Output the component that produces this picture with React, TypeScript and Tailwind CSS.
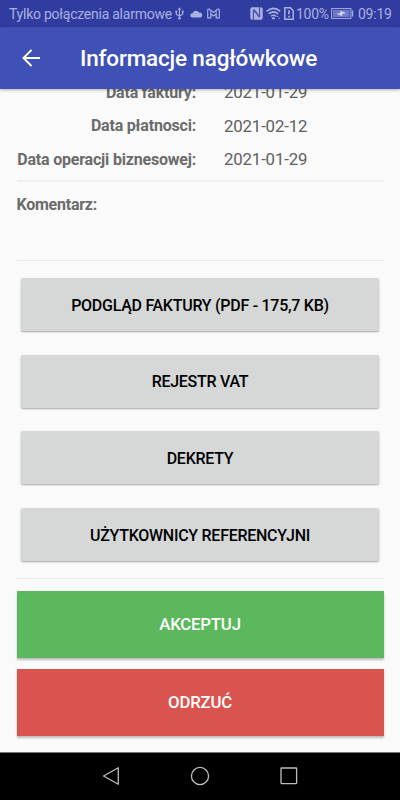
import React from "react";

const dates = [
  { label: "Data faktury:", value: "2021-01-29" },
  { label: "Data płatnosci:", value: "2021-02-12" },
  { label: "Data operacji biznesowej:", value: "2021-01-29" },
];

const links = [
  "PODGLĄD FAKTURY (PDF - 175,7 KB)",
  "REJESTR VAT",
  "DEKRETY",
  "UŻYTKOWNICY REFERENCYJNI",
];

function StatusBar() {
  return (
    <div className="flex h-[27px] shrink-0 items-center bg-[#303c9f] pl-[9px] text-[#a9b0e3]">
      <span className="w-[163px] whitespace-nowrap pt-px text-[14px] leading-[26px] tracking-[-0.25px]">Tylko połączenia alarmowe</span>
      <svg className="ml-[3px] shrink-0" width="9" height="13" viewBox="0 0 9 13" fill="none" stroke="currentColor">
        <path d="M4.5 2v9M1.3 4.5v2.8l3.2 1.8 3.2-1.8V4.5" strokeWidth="1.1" />
        <path d="M2.8 2.8 4.5.3l1.7 2.5Z" fill="currentColor" stroke="none" />
        <circle cx="4.5" cy="11.2" r="1.3" fill="currentColor" stroke="none" />
        <path d="M.4 3.6h1.8v1.8H.4zM6.8 3.6h1.8v1.8H6.8z" fill="currentColor" stroke="none" />
      </svg>
      <svg className="ml-[6px] shrink-0" width="13" height="9" viewBox="0 0 13 9" fill="currentColor">
        <path d="M2.3 8.5A2.1 2.1 0 0 1 2.5 4.2 3.5 3.5 0 0 1 9 3.6 2.5 2.5 0 0 1 10.4 8.5Z" />
      </svg>
      <svg className="ml-[4px] shrink-0" width="13" height="11" viewBox="0 0 13 11" fill="none" stroke="currentColor" strokeWidth="1.2">
        <path d="M.7 9.8V2.3Q.8.5 2.5 1.2l4 3.2 4-3.2q1.7-.7 1.8 1.1v7.5H9.2V5.9L6.5 8 3.8 5.9v3.9Z" />
        <path d="M3.8 6V2.5M9.2 6V2.5" strokeWidth=".8" />
      </svg>
      <svg className="ml-[30px] shrink-0" width="13" height="13" viewBox="0 0 13 13">
        <rect x=".3" y=".3" width="12.4" height="12.4" rx="1.8" fill="currentColor" />
        <path d="M3.4 13V3.2l6 7.2M9.6 0v9.6L3.8 2" fill="none" stroke="#303c9f" strokeWidth=".9" />
      </svg>
      <svg className="ml-[3px] shrink-0" width="15" height="13" viewBox="0 0 15 13" fill="none" stroke="currentColor" strokeWidth="1.5">
        <path d="M.7 4.4q6.8-6 13.6 0M2.8 6.9q4.7-4.1 9.4 0M5 9.3q2.5-2.1 5 0" />
        <circle cx="7.5" cy="11.3" r="1.3" fill="currentColor" stroke="none" />
        <path d="m10.3 10.1 1-1.5 1 1.5ZM12.3 10.8h2l-1 1.5Z" fill="currentColor" stroke="none" />
      </svg>
      <svg className="ml-[3px] shrink-0" width="10" height="13" viewBox="0 0 10 13" fill="none" stroke="currentColor" strokeWidth="1.5">
        <path d="M.8.8h5.6l2.8 2.8v8.6H.8Z" />
        <path d="M5 3.3v4M5 8.7v1.7" strokeWidth="1.7" />
      </svg>
      <span className="ml-[2px] w-[32px] whitespace-nowrap pt-px text-[14px] leading-[26px] tracking-[-0.25px]">100%</span>
      <svg className="ml-[3px] shrink-0" width="23" height="11" viewBox="0 0 23 11">
        <rect x=".6" y=".6" width="19.3" height="9.8" fill="none" stroke="currentColor" />
        <rect x="2" y="2" width="16.5" height="7" fill="#7279c4" />
        <path d="m5.5 5.8 4-.9V2.8l5.7 2.4-4 .8v2.2Z" fill="#d3d7f4" />
        <path d="M21.5 2.5v6" stroke="currentColor" strokeWidth="1.4" />
      </svg>
      <span className="ml-[4px] whitespace-nowrap pt-px text-[14px] leading-[26px] tracking-[-0.25px]">09:19</span>
    </div>
  );
}

function NavigationBar() {
  return (
    <div className="flex h-[48px] shrink-0 items-center border-t border-[#777] bg-black pb-px pl-[102px] text-[#bdbdbd]">
      <svg width="18" height="20" viewBox="0 0 18 20" fill="none" stroke="currentColor" strokeWidth="1.3">
        <path d="M16.3 1.7v16.6L1.5 10Z" strokeLinejoin="round" />
      </svg>
      <svg className="ml-[70px]" width="20" height="20" viewBox="0 0 20 20" fill="none" stroke="currentColor" strokeWidth="1.3">
        <circle cx="10" cy="10" r="8.6" />
      </svg>
      <svg className="ml-[70px]" width="18" height="18" viewBox="0 0 18 18" fill="none" stroke="currentColor" strokeWidth="1.3">
        <rect x="1" y="1" width="15.6" height="15.6" rx=".5" />
      </svg>
    </div>
  );
}

export default function App() {
  return (
    <div className="flex h-[800px] w-[400px] flex-col overflow-hidden bg-[#fafafa] font-[Roboto,sans-serif]">
      <StatusBar />
      <header className="z-10 flex h-[62px] shrink-0 items-center bg-[#3f51b5] pl-[22px] text-white shadow-[0_1px_3px_rgba(0,0,0,0.3)]">
        <svg width="18" height="18" viewBox="0 0 18 18" fill="none" stroke="currentColor" strokeWidth="2">
          <path d="M18 9H1.5M9.6.9 1.5 9l8.1 8.1" />
        </svg>
        <h1 className="ml-[40px] whitespace-nowrap text-[22.5px] font-medium leading-[30px] tracking-[-0.18px]">Informacje nagłówkowe</h1>
      </header>
      <main className="flex h-[663px] shrink-0 flex-col pl-[16.5px] pr-[16.5px]">
        <dl className="-mt-[13px] h-[106px] shrink-0 border-b-2 border-[#f0f0f0] text-[#606060]">
          {dates.map((item) => (
            <div key={item.label} className="flex h-[33.5px] items-center">
              <dt className="w-[179.5px] whitespace-nowrap text-right text-[16px] font-bold tracking-[-0.2px] text-[#6b6b6b]">{item.label}</dt>
              <dd className="ml-[28px] whitespace-nowrap text-[16.8px] tracking-[-0.15px]">{item.value}</dd>
            </div>
          ))}
        </dl>
        <section className="h-[78.5px] shrink-0 border-b border-[#e9e9e9] pt-[11px] text-[16px] font-bold leading-[24px] tracking-[-0.25px] text-[#6b6b6b]">
          Komentarz:
        </section>
        <div className="flex h-[318.5px] shrink-0 flex-col gap-[23.7px] border-b border-[#ececec] px-[4.5px] pt-[17.5px]">
          {links.map((label) => (
            <button key={label} className="h-[53px] shrink-0 rounded-[2px] bg-[#d6d8d7] pt-[2px] text-[16px] font-medium tracking-[-0.27px] text-black shadow-[0_1px_2px_rgba(0,0,0,0.35)]">
              {label}
            </button>
          ))}
        </div>
        <div className="flex flex-col gap-[11px] pt-[12px] text-[16.8px] font-medium tracking-[-0.2px] text-white">
          <button className="h-[67px] bg-[#5cb85c] pt-px shadow-[0_2px_2px_rgba(0,0,0,0.25)]">AKCEPTUJ</button>
          <button className="h-[67px] bg-[#d9534f] pt-px shadow-[0_2px_2px_rgba(0,0,0,0.25)]">ODRZUĆ</button>
        </div>
      </main>
      <NavigationBar />
    </div>
  );
}
